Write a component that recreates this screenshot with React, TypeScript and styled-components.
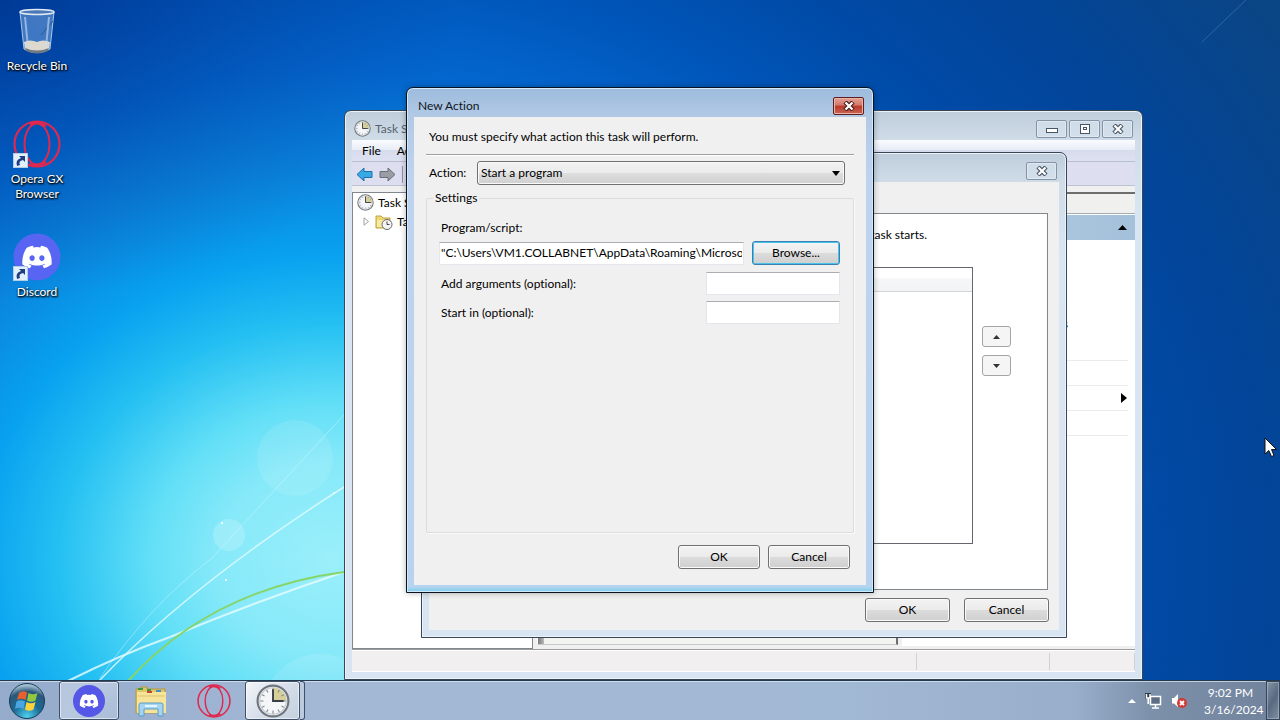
import React from "react";
import styled, { createGlobalStyle, css } from "styled-components";
import { FaDiscord } from "react-icons/fa";

const GlobalStyle = createGlobalStyle`
  * { box-sizing: border-box; }
  html, body { margin: 0; padding: 0; }
  body, button, input, select {
    font-family: Lato, "Open Sans", sans-serif;
    font-size: 12px;
    line-height: 16px;
    font-variant-ligatures: none;
    color: #000;
  }
  p, h1, h2, ul, fieldset { margin: 0; padding: 0; font: inherit; font-variant-ligatures: none; }
  ul { list-style: none; }
  fieldset { min-width: 0; }
`;

/* ---------- Desktop ---------- */

const Screen = styled.div`
  position: relative;
  display: flex;
  flex-direction: column;
  height: 100vh;
  overflow: hidden;
  background:
    radial-gradient(ellipse 460px 300px at 0 0, rgba(0, 25, 110, 0.42), rgba(0, 25, 110, 0)),
    radial-gradient(
      ellipse 1130px 980px at 330px 560px,
      #9aeffa 0%, #86e9f9 10%, #62dff7 16%, #25c0f2 24%, #08a2f0 31%, #0a84dd 40%,
      #0367cf 50%, #0056ba 60%, #004ba8 70%, #02459a 82%, #0a4585 100%
    );
`;

const Wallpaper = styled.svg`
  position: absolute;
  left: 0;
  bottom: 0;
  width: 1280px;
  height: 720px;
`;

const Desktop = styled.main`
  position: relative;
  flex: 1;
  min-height: 0;
`;

const IconColumn = styled.nav`
  display: flex;
  flex-direction: column;
  width: 74px;
  padding-top: 7px;
`;

const Shortcut = styled.a`
  display: flex;
  flex-direction: column;
  align-items: center;
  min-height: 113px;
  color: #fff;
  text-align: center;
  text-decoration: none;
  line-height: 15px;
  text-shadow: 0 1px 2px #000, 1px 1px 2px #000;
  > svg { flex: none; margin-bottom: 3px; }
`;

const Cursor = styled.svg`
  position: absolute;
  left: 1264px;
  top: 437px;
  width: 14px;
  height: 22px;
`;

/* ---------- Windows ---------- */

const Window = styled.section<{ $x: number; $y: number; $w: number; $h: number; $active?: boolean }>`
  position: absolute;
  left: ${(p) => p.$x}px;
  top: ${(p) => p.$y}px;
  width: ${(p) => p.$w}px;
  height: ${(p) => p.$h}px;
  display: flex;
  flex-direction: column;
  padding: 0 7px 7px;
  border: 1px solid ${(p) => (p.$active ? "#0a1420" : "#3a4654")};
  border-radius: 7px 7px 0 0;
  ${(p) =>
    p.$active
      ? css`
          background: linear-gradient(#9dbbdc 0, #b3cae6 30px, #bdd3ef 90px, #bad2f0 98%, #b4d4ee 99%, #74d0ee 100%);
          box-shadow: inset 0 0 0 1px #d3e9fa, 0 0 6px rgba(0, 0, 0, 0.3);
        `
      : css`
          background: linear-gradient(#bfcddb 0, #d0dde9 30px, #d8e5f2 100px, #d9e4f2 100%);
          box-shadow: inset 0 0 0 1px #eaf3fb;
        `}
`;

const TitleBar = styled.header<{ $icon?: boolean }>`
  display: flex;
  align-items: center;
  gap: 4px;
  flex: none;
  height: 29px;
  padding: 6px 2px 0 ${(p) => (p.$icon ? 2 : 4)}px;
`;

const Title = styled.h1<{ $dim?: boolean }>`
  flex: 1;
  color: ${(p) => (p.$dim ? "#59626c" : "#10151c")};
  white-space: nowrap;
`;

const CaptionButton = styled.button<{ $danger?: boolean }>`
  display: flex;
  align-items: center;
  justify-content: center;
  width: 31px;
  height: 18px;
  margin: 0 0 0 -2px;
  padding: 0;
  border: 1px solid ${(p) => (p.$danger ? "#5c1e1e" : "#8494a6")};
  border-radius: 2px;
  background: ${(p) =>
    p.$danger ? "linear-gradient(#e3a195 0, #d4776a 45%, #b8392b 50%, #cc6455 100%)" : "rgba(214, 226, 238, 0.6)"};
  box-shadow: inset 0 0 0 1px ${(p) => (p.$danger ? "#e8b3a8" : "rgba(255,255,255,.35)")};
`;

const PushButton = styled.button<{ $w: number; $focus?: boolean }>`
  width: ${(p) => p.$w}px;
  height: 24px;
  padding: 0;
  border: 1px solid ${(p) => (p.$focus ? "#3c7fb1" : "#707070")};
  border-radius: 3px;
  background: linear-gradient(#f3f3f3 0, #ebebeb 48%, #dcdcdc 50%, #cfcfcf 100%);
  box-shadow: inset 0 0 0 1px ${(p) => (p.$focus ? "#48c4ea" : "#fafafa")};
`;

/* ---------- Task Scheduler ---------- */

const MenuBar = styled.nav`
  display: flex;
  gap: 16px;
  flex: none;
  height: 22px;
  padding: 2px 10px;
  border-bottom: 1px solid #b8bfcb;
  background: linear-gradient(#fafcff 0, #e8edf7 45%, #d7dcec 50%, #dde0f0 100%);
  button { padding: 0; border: 0; background: none; }
`;

const ToolBar = styled.div`
  display: flex;
  align-items: center;
  gap: 6px;
  flex: none;
  height: 24px;
  padding: 2px 4px 0;
  border-bottom: 1px solid #bcc4d0;
  background: #dddff0;
  button { display: flex; padding: 0; border: 0; background: none; }
`;

const Divider = styled.span`
  width: 1px;
  height: 17px;
  background: #8c95a5;
`;

const Panes = styled.div`
  display: grid;
  grid-template-columns: 181px 1fr 233px;
  gap: 4px;
  flex: 1;
  min-height: 0;
  padding-top: 6px;
  background: #f0f0f0;
`;

const TreePane = styled.div`
  border: 1px solid #82878e;
  background: #fff;
  white-space: nowrap;
  overflow: hidden;
`;

const TreeRow = styled.div<{ $child?: boolean }>`
  display: flex;
  align-items: center;
  gap: 4px;
  height: 19px;
  padding-left: ${(p) => (p.$child ? 9 : 4)}px;
`;

const CenterPane = styled.div`
  display: flex;
  margin-bottom: 4px;
  border: 1px solid #fff;
  border-right: 2px solid #6d6d6d;
  border-bottom-color: #c8c8c8;
  background: #f3f4f2;
  &::before { content: ""; width: 6px; background: linear-gradient(90deg, #777, #bbb); }
`;

const ActionsPane = styled.div`
  display: flex;
  flex-direction: column;
  margin-bottom: 3px;
  border-top: 2px solid #6d6d6d;
  background: #fff;
`;

const ActionsHeader = styled.div`
  flex: none;
  height: 20px;
  border-bottom: 1px solid #a3abb3;
  background: #f0f0ee;
`;

const ActionsGroup = styled.button`
  display: flex;
  align-items: center;
  justify-content: flex-end;
  flex: none;
  height: 25px;
  margin-top: 1px;
  padding: 0 8px;
  border: 0;
  background: linear-gradient(90deg, #b7cfe6, #a4c0da);
`;

const ActionItem = styled.li<{ $first?: boolean }>`
  display: flex;
  align-items: ${(p) => (p.$first ? "flex-end" : "center")};
  justify-content: flex-end;
  height: ${(p) => (p.$first ? 121 : 25)}px;
  margin-right: 7px;
  padding-right: ${(p) => (p.$first ? 60 : 1)}px;
  padding-bottom: ${(p) => (p.$first ? 28 : 0)}px;
  border-bottom: 1px solid #ebebeb;
`;

const StatusBar = styled.footer`
  display: flex;
  justify-content: flex-end;
  flex: none;
  height: 23px;
  border-top: 1px solid #9c9c9c;
  box-shadow: inset 0 1px 0 #fff;
  background: #f1eff0;
  border-bottom: 1px solid #fff;
  span { width: 133px; margin: 3px 0 1px; border-left: 1px solid #d2d2d2; }
  span:last-child { width: 86px; border-right: 1px solid #d2d2d2; }
`;

/* ---------- Task dialog ---------- */

const DialogBody = styled.div`
  display: flex;
  flex-direction: column;
  flex: 1;
  min-height: 0;
  background: #f0f0f0;
`;

const TabPage = styled.div`
  flex: 1;
  margin: 31px 11px 0 10px;
  padding: 13px 0 0 12px;
  border: 1px solid #82878e;
  background: #fff;
`;

const TabHint = styled.p`
  width: 475px;
  text-align: right;
  white-space: nowrap;
`;

const ListRow = styled.div`
  display: flex;
  align-items: flex-start;
  gap: 9px;
  margin-top: 24px;
`;

const ListBox = styled.div`
  width: 521px;
  height: 277px;
  border: 1px solid #64686e;
  &::before {
    content: "";
    display: block;
    height: 23px;
    border-bottom: 1px solid #d5d5d5;
    background: linear-gradient(#fff 0, #fff 40%, #f4f6f7 50%, #f2f4f5 100%);
  }
`;

const OrderButtons = styled.div`
  display: flex;
  flex-direction: column;
  gap: 8px;
  padding-top: 59px;
  button {
    display: flex;
    align-items: center;
    justify-content: center;
    width: 29px;
    height: 21px;
    padding: 0;
    border: 1px solid #a4a4a4;
    border-radius: 3px;
    background: #f5f5f5;
  }
`;

const ButtonRow = styled.div<{ $gap: number; $pad: string }>`
  display: flex;
  justify-content: flex-end;
  gap: ${(p) => p.$gap}px;
  padding: ${(p) => p.$pad};
`;

/* ---------- New Action dialog ---------- */

const Intro = styled.p`
  margin: 0 12px;
  padding: 12px 3px 9px;
  border-bottom: 1px solid #a0a0a0;
  box-shadow: 0 1px 0 #fff;
`;

const ActionRow = styled.div`
  display: flex;
  align-items: center;
  justify-content: space-between;
  margin: 6px 21px 0 15px;
`;

const SelectWrap = styled.span`
  position: relative;
  width: 368px;
  svg { position: absolute; right: 5px; top: 10px; pointer-events: none; }
`;

const Select = styled.select`
  display: block;
  width: 100%;
  height: 24px;
  padding: 0 3px;
  appearance: none;
  border: 1px solid #707070;
  border-radius: 3px;
  background: linear-gradient(#f2f2f2 0, #ebebeb 48%, #dedede 50%, #d0d0d0 100%);
  box-shadow: inset 0 0 0 1px #fafafa;
`;

const Group = styled.fieldset`
  flex: 1;
  min-height: 0;
  margin: 5px 12px 0;
  padding: 14px 13px 0 12px;
  border: 1px solid #dcdcdc;
  border-radius: 2px;
  box-shadow: 1px 1px 0 #fafafa;
  legend { margin-left: -6px; padding: 0 2px; }
`;

const ScriptRow = styled.div`
  display: flex;
  align-items: center;
  justify-content: space-between;
  margin: 5px 0 7px;
`;

const FieldRow = styled.div`
  display: flex;
  align-items: center;
  justify-content: space-between;
  margin-bottom: 6px;
  padding-left: 2px;
`;

const FieldLabel = styled.label`
  padding-left: 2px;
`;

const TextField = styled.input<{ $w: number }>`
  width: ${(p) => p.$w}px;
  height: 23px;
  padding: 0 1px 2px;
  border: 1px solid #e3e6ea;
  border-top-color: #abadb3;
  background: #fff;
`;

/* ---------- Taskbar ---------- */

const TaskBar = styled.footer`
  position: relative;
  display: flex;
  align-items: stretch;
  flex: none;
  height: 40px;
  border-top: 1px solid #24384e;
  background: linear-gradient(90deg, #95abcb 0, #a3b8d5 25%, #a2b9d6 65%, #98aecb 84%, #7d90aa 90%, #71839c 100%);
  box-shadow: inset 0 1px 0 rgba(222, 236, 250, 0.7);
`;

const TaskButton = styled.button<{ $open?: boolean; $w: number }>`
  display: flex;
  align-items: center;
  justify-content: center;
  width: ${(p) => p.$w}px;
  padding: 0;
  border: 1px solid ${(p) => (p.$open ? "#3e5068" : "transparent")};
  border-radius: 3px;
  background: ${(p) =>
    p.$open ? "linear-gradient(135deg, rgba(255,255,255,.3), rgba(215,226,240,.5) 45%, rgba(190,205,225,.4))" : "none"};
  box-shadow: ${(p) => (p.$open ? "inset 0 0 0 1px rgba(255,255,255,.55)" : "none")};
`;

const StartButton = styled(TaskButton)`
  margin-right: 5px;
`;

const StackedButton = styled(TaskButton)`
  background: linear-gradient(135deg, #f3f6fa, #d2dbe7 60%, #c4d0df);
`;

const StackEdge = styled.span`
  width: 5px;
  border: 1px solid #3e5068;
  border-left: 0;
  border-radius: 0 3px 3px 0;
  background: #bccadd;
`;

const Tray = styled.div`
  display: flex;
  align-items: center;
  margin-left: auto;
  color: #fff;
  svg { flex: none; }
`;

const TrayIcons = styled.div`
  display: flex;
  align-items: center;
  gap: 9px;
  margin-right: 16px;
`;

const Clock = styled.time`
  width: 53px;
  line-height: 17px;
  text-align: center;
  white-space: nowrap;
`;

const ShowDesktop = styled.button`
  align-self: stretch;
  width: 14px;
  margin-left: 9px;
  border: 1px solid #35465a;
  background: linear-gradient(120deg, #8795a6, #586a80 50%, #8090a4);
  box-shadow: inset 0 0 0 1px rgba(200, 215, 230, 0.4);
`;

/* ---------- Drawings ---------- */

const BinIcon = () => (
  <svg width="40" height="48" viewBox="0 0 40 48" aria-hidden="true">
    <path d="M3 5 L7 42 Q20 49 33 42 L37 5 Z" fill="#6d9ed8" fillOpacity=".6" stroke="#a8c8ea" strokeWidth="1" />
    <path d="M7 35 L8 43 Q20 48 32 43 L33 35 Q26 32 20 35 Q13 32 7 35Z" fill="#ddd9ce" />
    <path d="M8 41 Q20 46 32 41 L31 44 Q20 49 9 44Z" fill="#6f7a84" />
    <path d="M10 20 L20 15 L18 27 L29 18 L31 29 L22 34 L11 30Z" fill="#3c78c4" fillOpacity=".6" />
    <path d="M24 28 L36 14" stroke="#31588e" strokeWidth="1" />
    <path d="M8 10 L11 40 M32 10 L29 40" stroke="#c9def4" strokeOpacity=".6" strokeWidth="2" />
    <ellipse cx="20" cy="5" rx="17" ry="2.500" fill="#4b79b8" stroke="#dfe9f2" strokeWidth="1.500" />
  </svg>
);

const ShortcutArrow = () => (
  <g transform="translate(0 33)">
    <rect x="0.5" y="0.5" width="14" height="14" fill="#e3f0fb" stroke="#b4cde6" />
    <path d="M4 13 Q2 7 8 5 L6 3 H12 V9 L10 7 Q5 8 7 12Z" fill="#1d3f80" />
  </g>
);

const OperaMark = () => (
  <g fill="none" stroke="#e0284f">
    <circle cx="24" cy="24" r="22.500" strokeWidth="2.200" />
    <ellipse cx="24" cy="24" rx="12.500" ry="20.500" strokeWidth="2" />
    <path d="M17 4.500 Q24 .5 33 6 M17 43.500 Q24 47.500 33 42" strokeWidth="2.500" />
  </g>
);

const ClockIcon = ({ size }: { size: number }) => (
  <svg width={size} height={size} viewBox="0 0 32 32" aria-hidden="true">
    <circle cx="16" cy="16" r="14.500" fill="#f4f6f8" stroke="#70767d" strokeWidth="2" />
    <circle cx="16" cy="16" r="12.500" fill="none" stroke="#c2c8ce" strokeWidth="1" />
    <path d="M16 16 V3.500 A12.500 12.500 0 0 1 28.500 16Z" fill="#d7cf9a" />
    <path d="M16 4 V7 M16 25 V28 M4 16 H7 M25 16 H28 M22 5.600 L20.700 8 M26.400 10 L24 11.300 M26.400 22 L24 20.700 M22 26.400 L20.700 24 M10 26.400 L11.300 24 M5.600 22 L8 20.700 M5.600 10 L8 11.300 M10 5.600 L11.300 8" stroke="#7f868d" strokeWidth="1" />
    <path d="M16 5 V16 H26" fill="none" stroke="#3a3f45" strokeWidth="1.800" />
  </svg>
);

const FolderClock = () => (
  <svg width="18" height="16" viewBox="0 0 18 16" aria-hidden="true">
    <path d="M1 2 H6 L8 4 H15 V14 H1Z" fill="#ecd676" stroke="#c0a23c" />
    <path d="M2 6 H14 V13 H2Z" fill="#f7eaa2" />
    <circle cx="12" cy="10.500" r="5" fill="#f4f4f4" stroke="#6a6a6a" />
    <path d="M12 7.500 V10.500 H14.500" fill="none" stroke="#444" />
  </svg>
);

const Cross = ({ light }: { light?: boolean }) => (
  <svg width="12" height="10" viewBox="0 0 12 10" aria-hidden="true">
    <path d="M2 1 L10 9 M10 1 L2 9" stroke={light ? "#4b2020" : "#4a5666"} strokeWidth="4.500" />
    <path d="M2.500 1.500 L9.500 8.500 M9.500 1.500 L2.500 8.500" stroke="#fff" strokeWidth="2.200" />
  </svg>
);

const Triangle = ({ dir, w = 9, h = 5, color = "#000" }: { dir: "up" | "down"; w?: number; h?: number; color?: string }) => (
  <svg width={w} height={h} viewBox="0 0 10 10" preserveAspectRatio="none" aria-hidden="true">
    <path d={dir === "up" ? "M5 0 L10 10 H0Z" : "M0 0 H10 L5 10Z"} fill={color} />
  </svg>
);

const ToolArrow = ({ back }: { back?: boolean }) => (
  <svg width="17" height="15" viewBox="0 0 17 15" aria-hidden="true">
    <path
      d={back ? "M1 7.500 L8 1 V4.500 H16 V10.500 H8 V14Z" : "M16 7.500 L9 1 V4.500 H1 V10.500 H9 V14Z"}
      fill={back ? "#37a9e4" : "#9a9da3"}
      stroke={back ? "#1f6fa8" : "#6b6e74"}
    />
  </svg>
);

const StartOrb = () => (
  <svg width="38" height="38" viewBox="0 0 38 38" aria-hidden="true">
    <defs>
      <radialGradient id="orb" cx="50%" cy="95%" r="90%">
        <stop offset="0" stopColor="#4fd2ee" />
        <stop offset=".45" stopColor="#1b6a96" />
        <stop offset=".8" stopColor="#2b5878" />
        <stop offset="1" stopColor="#a4c0d4" />
      </radialGradient>
    </defs>
    <circle cx="19" cy="19" r="17.500" fill="url(#orb)" stroke="#173a56" />
    <path d="M11 11 Q15 8 19 10.500 L17.500 18 Q13.500 15.500 9 18Z" fill="#e8602c" />
    <path d="M20.500 11 Q25 13.500 29.500 11 L27.500 18.500 Q23 21 19 18.500Z" fill="#93c83e" />
    <path d="M8.500 19.500 Q13 17 17 19.500 L15.500 27 Q11 24.500 7 27Z" fill="#4aa6e0" />
    <path d="M18.500 20 Q23 22.500 27.500 20 L25.500 27.500 Q21 30 17 27.500Z" fill="#fbd13c" />
  </svg>
);

const ExplorerIcon = () => (
  <svg width="34" height="32" viewBox="0 0 34 32" aria-hidden="true">
    <path d="M2 4 H7 V2 H13 V4 H31 V28 H2Z" fill="#e2c766" stroke="#b4963e" />
    <path d="M3 7 H32 V28 H3Z" fill="#f5e49a" />
    <path d="M4 4 H9 M13 5 H17" stroke="#3c9a44" strokeWidth="2" />
    <path d="M13 7 H18" stroke="#c8472e" strokeWidth="2" />
    <path d="M22 6 H27" stroke="#3f8ec8" strokeWidth="2" />
    <path d="M4 11 H31" stroke="#dcc36c" />
    <path d="M5 31 V20 Q5 18 7 18 H27 Q29 18 29 20 V31 H24 V24 H10 V31Z" fill="#a3d4f0" stroke="#5d9cc6" />
    <path d="M11 21 H23" stroke="#e4f5ff" strokeWidth="2" />
  </svg>
);

const NetworkIcon = () => (
  <svg width="17" height="16" viewBox="0 0 17 16" aria-hidden="true">
    <path d="M5 3 H16 V12 H5Z M0 0 H6 V6 H0Z" fill="#2d3a4a" />
    <path d="M5.500 3.500 H15.500 V11.500 H5.500Z" fill="#5d6e84" stroke="#fff" strokeWidth="1.500" />
    <path d="M10.500 12 V15 M7 15 H14" stroke="#fff" strokeWidth="1.500" />
    <path d="M1.500 1 V5 H5 V1 M3.200 5 V11" fill="none" stroke="#fff" strokeWidth="1.500" />
  </svg>
);

const VolumeIcon = () => (
  <svg width="17" height="16" viewBox="0 0 17 16" aria-hidden="true">
    <path d="M1 5 H3 L7 1 V14 L3 10.500 H1Z" fill="#fff" />
    <circle cx="11" cy="10" r="5" fill="#d23a34" />
    <path d="M9 8 L13 12 M13 8 L9 12" stroke="#fff" strokeWidth="1.800" />
  </svg>
);

export default function App() {
  return (
    <Screen>
      <GlobalStyle />
      <Wallpaper viewBox="0 0 1280 720" aria-hidden="true">
        <g fill="#fff">
          <circle cx="295" cy="458" r="38" fillOpacity=".1" />
          <circle cx="229" cy="535" r="16" fillOpacity=".18" />
          <circle cx="320" cy="712" r="58" fillOpacity=".1" />
          <circle cx="222" cy="523" r="1" /><circle cx="226" cy="580" r="1" /><circle cx="334" cy="493" r="1" />
        </g>
        <g fill="none" strokeLinecap="round">
          <path d="M98 682 Q190 585 344 487" stroke="#dffaff" strokeWidth="1.500" strokeOpacity=".85" />
          <path d="M100 678 Q150 605 212 558 L344 415" stroke="#dffaff" strokeOpacity=".4" />
          <path d="M68 681 Q120 655 170 637 Q260 600 344 572" stroke="#e8fcff" strokeWidth="2" strokeOpacity=".8" />
          <path d="M128 681 Q210 590 344 572" stroke="#86d56a" strokeWidth="2" />
          <path d="M1202 42 L1248 -2" stroke="#5f8fc0" strokeOpacity=".45" />
        </g>
      </Wallpaper>

      <Desktop>
        <IconColumn aria-label="Desktop">
          <Shortcut href="#recycle-bin">
            <BinIcon />
            Recycle Bin
          </Shortcut>
          <Shortcut href="#opera">
            <svg width="48" height="48" viewBox="0 0 48 48" aria-hidden="true">
              <OperaMark />
              <ShortcutArrow />
            </svg>
            Opera GX Browser
          </Shortcut>
          <Shortcut href="#discord">
            <svg width="48" height="48" viewBox="0 0 48 48" aria-hidden="true">
              <circle cx="24" cy="24" r="23.500" fill="#5865f2" />
              <FaDiscord x="8" y="8" size={32} color="#fff" />
              <ShortcutArrow />
            </svg>
            Discord
          </Shortcut>
        </IconColumn>

        <Window $x={344} $y={110} $w={799} $h={570} aria-label="Task Scheduler">
          <TitleBar $icon>
            <ClockIcon size={17} />
            <Title $dim>Task Scheduler</Title>
            <CaptionButton aria-label="Minimize">
              <svg width="12" height="10" viewBox="0 0 12 10"><rect x=".5" y="4.500" width="11" height="4" fill="#fff" stroke="#4a5666" /></svg>
            </CaptionButton>
            <CaptionButton aria-label="Restore">
              <svg width="12" height="10" viewBox="0 0 12 10">
                <rect x="1.500" y=".5" width="9" height="9" fill="#fff" stroke="#4a5666" />
                <rect x="4.500" y="3.500" width="3" height="2" fill="#fff" stroke="#4a5666" />
              </svg>
            </CaptionButton>
            <CaptionButton aria-label="Close"><Cross /></CaptionButton>
          </TitleBar>
          <MenuBar>
            <button>File</button>
            <button>Action</button>
          </MenuBar>
          <ToolBar>
            <button aria-label="Back"><ToolArrow back /></button>
            <button aria-label="Forward"><ToolArrow /></button>
            <Divider />
          </ToolBar>
          <Panes>
            <TreePane>
              <TreeRow><ClockIcon size={17} />Task Scheduler (Local)</TreeRow>
              <TreeRow $child>
                <svg width="9" height="9" viewBox="0 0 9 9" aria-hidden="true"><path d="M2 .8 L6.500 4.500 L2 8.200Z" fill="#fff" stroke="#a0a0a0" /></svg>
                <FolderClock />
                Task Scheduler Library
              </TreeRow>
            </TreePane>
            <CenterPane />
            <ActionsPane>
              <ActionsHeader />
              <ActionsGroup aria-label="Collapse"><Triangle dir="up" /></ActionsGroup>
              <ul>
                <ActionItem $first>Enable All Tasks</ActionItem>
                <ActionItem />
                <ActionItem>
                  <svg width="6" height="10" viewBox="0 0 6 10" aria-hidden="true"><path d="M0 0 L6 5 L0 10Z" /></svg>
                </ActionItem>
                <ActionItem />
              </ul>
            </ActionsPane>
          </Panes>
          <StatusBar><span /><span /></StatusBar>
        </Window>

        <Window $x={421} $y={152} $w={646} $h={486} aria-label="Create Task">
          <TitleBar>
            <Title $dim />
            <CaptionButton aria-label="Close"><Cross /></CaptionButton>
          </TitleBar>
          <DialogBody>
            <TabPage>
              <TabHint>you must specify the action that will occur when your task starts.</TabHint>
              <ListRow>
                <ListBox />
                <OrderButtons>
                  <button aria-label="Move up"><Triangle dir="up" w={7} h={4} color="#333" /></button>
                  <button aria-label="Move down"><Triangle dir="down" w={7} h={4} color="#333" /></button>
                </OrderButtons>
              </ListRow>
            </TabPage>
            <ButtonRow $gap={14} $pad="8px 10px 8px">
              <PushButton $w={85}>OK</PushButton>
              <PushButton $w={85}>Cancel</PushButton>
            </ButtonRow>
          </DialogBody>
        </Window>

        <Window $x={406} $y={87} $w={468} $h={506} $active role="dialog" aria-label="New Action">
          <TitleBar>
            <Title>New Action</Title>
            <CaptionButton $danger aria-label="Close"><Cross light /></CaptionButton>
          </TitleBar>
          <DialogBody>
            <Intro>You must specify what action this task will perform.</Intro>
            <ActionRow>
              <label htmlFor="action">Action:</label>
              <SelectWrap>
                <Select id="action" defaultValue="start">
                  <option value="start">Start a program</option>
                </Select>
                <Triangle dir="down" w={8} h={5} />
              </SelectWrap>
            </ActionRow>
            <Group>
              <legend>Settings</legend>
              <FieldLabel htmlFor="script">Program/script:</FieldLabel>
              <ScriptRow>
                <TextField id="script" $w={305} defaultValue={'"C:\\Users\\VM1.COLLABNET\\AppData\\Roaming\\Microsoft\\Windows'} />
                <PushButton $w={88} $focus>Browse...</PushButton>
              </ScriptRow>
              <FieldRow>
                <label htmlFor="args">Add arguments (optional):</label>
                <TextField id="args" $w={134} />
              </FieldRow>
              <FieldRow>
                <label htmlFor="start">Start in (optional):</label>
                <TextField id="start" $w={134} />
              </FieldRow>
            </Group>
            <ButtonRow $gap={8} $pad="12px 16px 16px">
              <PushButton $w={82}>OK</PushButton>
              <PushButton $w={82}>Cancel</PushButton>
            </ButtonRow>
          </DialogBody>
        </Window>

        <Cursor viewBox="0 0 14 22" aria-hidden="true">
          <path d="M1 1 V17 L4.800 13.500 L7.500 19.500 L10 18.500 L7.500 12.500 H12.500Z" fill="#fff" stroke="#111" />
        </Cursor>
      </Desktop>

      <TaskBar>
        <StartButton $w={54} aria-label="Start"><StartOrb /></StartButton>
        <TaskButton $w={60} $open aria-label="Discord">
          <svg width="32" height="32" viewBox="0 0 48 48">
            <circle cx="24" cy="24" r="24" fill="#5558e6" />
            <FaDiscord x="9" y="9" size={30} color="#fff" />
          </svg>
        </TaskButton>
        <TaskButton $w={64} aria-label="Windows Explorer"><ExplorerIcon /></TaskButton>
        <TaskButton $w={62} aria-label="Opera GX">
          <svg width="34" height="34" viewBox="0 0 48 48"><OperaMark /></svg>
        </TaskButton>
        <StackedButton $w={55} $open aria-label="Task Scheduler"><ClockIcon size={34} /></StackedButton>
        <StackEdge />
        <Tray>
          <TrayIcons>
            <Triangle dir="up" w={8} h={4} color="#fff" />
            <NetworkIcon />
            <VolumeIcon />
          </TrayIcons>
          <Clock>9:02 PM<br />3/16/2024</Clock>
          <ShowDesktop aria-label="Show desktop" />
        </Tray>
      </TaskBar>
    </Screen>
  );
}
